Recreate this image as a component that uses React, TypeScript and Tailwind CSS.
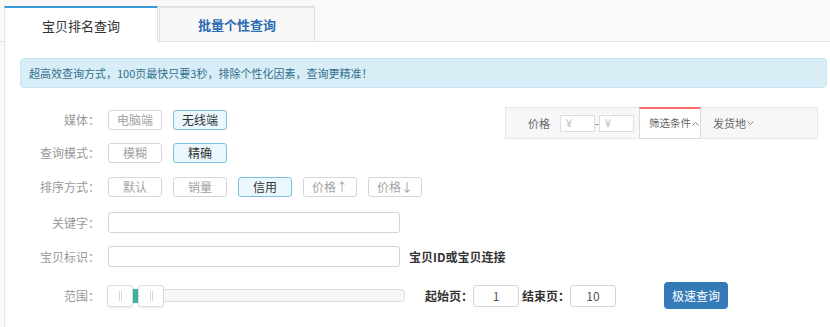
import React from "react";

function Btn({ label, active }: { label: string; active?: boolean }) {
  return (
    <div
      className={
        active
          ? "w-[54px] h-[20px] rounded-[3px] border border-[#7cc0e4] bg-[#eaf8fd] text-[#333] flex items-center justify-center text-[12px]"
          : "w-[54px] h-[20px] rounded-[3px] border border-[#d6d6d6] bg-white text-[#a3a3a3] flex items-center justify-center text-[12px]"
      }
    >
      {label}
    </div>
  );
}

function Label({ text }: { text: string }) {
  return <div className="w-[80px] shrink-0 text-right text-[12px] text-[#999]">{text}</div>;
}

function Grip() {
  return (
    <div className="flex gap-[1px]">
      <div className="w-[1px] h-[10px] bg-[#d8d8d8]" />
      <div className="w-[1px] h-[10px] bg-[#d8d8d8]" />
    </div>
  );
}

export default function App() {
  return (
    <div className="w-[830px] h-[327px] overflow-hidden bg-[#faf9f8] font-['Noto_Sans_CJK_SC','Noto_Sans',sans-serif] text-[12px] leading-none">
      {/* tabs */}
      <div className="h-[42px] flex items-end pl-[4px] border-b border-[#e3e3e3]">
        <div className="relative z-10 w-[154px] h-[36px] -mb-px bg-white border-t-2 border-t-[#3a9ad9] border-l border-l-[#e3e3e3] border-r border-r-[#e3e3e3] flex items-center justify-center text-[13px] text-[#333]">
          宝贝排名查询
        </div>
        <div className="ml-[1px] w-[156px] h-[35px] bg-[#f9f8f7] border-t-2 border-t-[#e2e2e2] border-x border-x-[#e2e2e2] flex items-center justify-center text-[13px] font-bold text-[#2b6cb3]">
          批量个性查询
        </div>
      </div>

      {/* content */}
      <div className="ml-[4px] h-[285px] bg-white border-l border-[#e6e6e6] pt-[16px] pl-[15px] pr-[3px]">
        <div className="h-[30px] rounded-[4px] border border-[#c4e6f2] bg-[#d9edf7] text-[#31708f] text-[11px] flex items-center pl-[8px]">
          超高效查询方式，100页最快只要3秒，排除个性化因素，查询更精准！
        </div>

        <div className="mt-[19px] flex items-start justify-between">
          <div className="pt-[3px] flex flex-col">
            <div className="h-[20px] flex items-center">
              <Label text="媒体：" />
              <div className="ml-[8px] flex gap-[11px]">
                <Btn label="电脑端" />
                <Btn label="无线端" active />
              </div>
            </div>
            <div className="mt-[13px] h-[20px] flex items-center">
              <Label text="查询模式：" />
              <div className="ml-[8px] flex gap-[11px]">
                <Btn label="模糊" />
                <Btn label="精确" active />
              </div>
            </div>
            <div className="mt-[14px] h-[20px] flex items-center">
              <Label text="排序方式：" />
              <div className="ml-[8px] flex gap-[11px]">
                <Btn label="默认" />
                <Btn label="销量" />
                <Btn label="信用" active />
                <Btn label="价格↑" />
                <Btn label="价格↓" />
              </div>
            </div>
          </div>

          <div className="mr-[9px] w-[313px] h-[32px] bg-[#f7f7f7] border border-[#e8e8e8] flex items-center text-[11px] whitespace-nowrap">
            <div className="ml-[22px] text-[#666]">价格</div>
            <div className="ml-[10px] w-[35px] h-[17px] bg-white border border-[#ddd] flex items-center pl-[3px] text-[10px] text-[#bbb]">￥</div>
            <div className="w-[4px] text-center text-[#666]">-</div>
            <div className="w-[35px] h-[17px] bg-white border border-[#ddd] flex items-center pl-[3px] text-[10px] text-[#bbb]">￥</div>
            <div className="ml-[5px] self-stretch -my-px w-[62px] shrink-0 bg-white border-t-2 border-t-[#f76b6b] border-x border-x-[#dcdcdc] border-b border-b-[#dcdcdc] flex items-center pl-[9px] text-[10.5px] text-[#666]">
              筛选条件
              <svg width="7" height="6" viewBox="0 0 7 6" className="ml-[1px] shrink-0">
                <polyline points="0.5,4.5 3.5,1.5 6.5,4.5" fill="none" stroke="#888" strokeWidth="1" />
              </svg>
            </div>
            <div className="ml-[12px] flex items-center text-[#666]">
              发货地
              <svg width="7" height="6" viewBox="0 0 7 6" className="ml-[1px] shrink-0">
                <polyline points="0.5,1.5 3.5,4.5 6.5,1.5" fill="none" stroke="#888" strokeWidth="1" />
              </svg>
            </div>
          </div>
        </div>

        <div className="mt-[15px] h-[21px] flex items-center">
          <Label text="关键字：" />
          <div className="ml-[8px] w-[292px] h-[21px] rounded-[3px] border border-[#d3d3d3] bg-white" />
        </div>

        <div className="mt-[13px] h-[21px] flex items-center">
          <Label text="宝贝标识：" />
          <div className="ml-[8px] w-[292px] h-[21px] rounded-[3px] border border-[#d3d3d3] bg-white" />
          <div className="ml-[9px] font-bold text-[#333]">宝贝ID或宝贝连接</div>
        </div>

        <div className="mt-[15px] h-[27px] flex items-center">
          <Label text="范围：" />
          <div className="ml-[8px] relative w-[297px] h-[22px] flex items-center">
            <div className="w-full h-[13px] rounded-[4px] border border-[#dedede] bg-[#f7f7f7]" />
            <div className="absolute left-[25px] top-[4px] w-[6px] h-[14px] bg-[#3cb3a4]" />
            <div className="absolute left-[-1px] top-0 w-[26px] h-[22px] rounded-[3px] border border-[#dcdcdc] bg-white shadow-[0_1px_2px_rgba(0,0,0,0.08)] flex items-center justify-center">
              <Grip />
            </div>
            <div className="absolute left-[30px] top-0 w-[26px] h-[22px] rounded-[3px] border border-[#dcdcdc] bg-white shadow-[0_1px_2px_rgba(0,0,0,0.08)] flex items-center justify-center">
              <Grip />
            </div>
          </div>
          <div className="ml-[20px] font-bold text-[#333]">起始页：</div>
          <div className="w-[46px] h-[22px] rounded-[3px] border border-[#d6d6d6] bg-white flex items-center justify-center text-[#555]">1</div>
          <div className="ml-[3px] font-bold text-[#333]">结束页：</div>
          <div className="w-[46px] h-[22px] rounded-[3px] border border-[#d6d6d6] bg-white flex items-center justify-center text-[#555]">10</div>
          <div className="ml-[48px] w-[64px] h-[27px] rounded-[4px] bg-[#337ab7] text-white text-[12px] flex items-center justify-center">
            极速查询
          </div>
        </div>
      </div>
    </div>
  );
}
